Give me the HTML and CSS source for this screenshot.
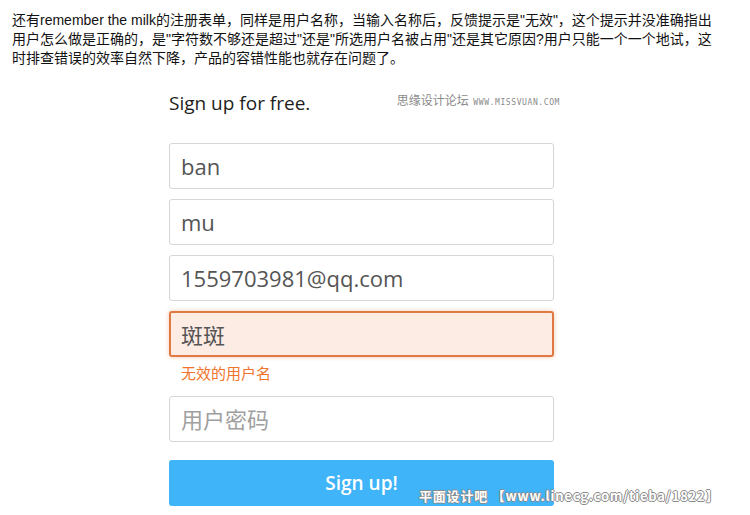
FILE: index.html
```html
<!DOCTYPE html>
<html lang="zh-CN">
<head>
    <meta charset="UTF-8">
    <title>Sign up for free</title>
    <link rel="stylesheet" href="styles.css">
</head>
<body>
    <p class="intro">还有remember the milk的注册表单，同样是用户名称，当输入名称后，反馈提示是"无效"，这个提示并没准确指出用户怎么做是正确的，是"字符数不够还是超过"还是"所选用户名被占用"还是其它原因?用户只能一个一个地试，这时排查错误的效率自然下降，产品的容错性能也就存在问题了。</p>

    <div class="signup">
        <div class="signup-head">
            <h1>Sign up for free.</h1>
            <span class="mark">思缘设计论坛 <small>WWW.MISSVUAN.COM</small></span>
        </div>

        <form class="signup-form">
            <input type="text" class="field" value="ban">
            <input type="text" class="field" value="mu">
            <input type="text" class="field" value="1559703981@qq.com">
            <input type="text" class="field field-error" value="斑斑">
            <div class="error-msg">无效的用户名</div>
            <input type="password" class="field field-last" placeholder="用户密码">
            <button type="button" class="signup-btn">Sign up!</button>
        </form>
    </div>

    <div class="credit">平面设计吧 【www.linecg.com/tieba/1822】</div>
</body>
</html>
```

FILE: styles.css
```css
* {
    margin: 0;
    padding: 0;
    box-sizing: border-box;
}

body {
    background: #fff;
    font-family: 'Liberation Sans', 'Noto Sans CJK SC', sans-serif;
    position: relative;
    min-height: 515px;
}

.intro {
    width: 708px;
    margin-left: 12px;
    padding-top: 11px;
    font-size: 14px;
    line-height: 19px;
    color: #111;
}

.signup {
    width: 385px;
    margin-left: 169px;
    margin-top: 23px;
}

.signup-head {
    display: flex;
    justify-content: space-between;
    align-items: flex-start;
    margin-right: -6px;
    margin-bottom: 28px;
}

.signup-head h1 {
    font-family: 'Open Sans', sans-serif;
    font-weight: 400;
    font-size: 19px;
    line-height: 24px;
    color: #1d1d1d;
}

.mark {
    font-family: 'Noto Sans CJK SC', sans-serif;
    font-size: 12px;
    line-height: 14px;
    color: #8a8a8a;
    margin-top: 2px;
}

.mark small {
    font-family: 'DejaVu Sans Mono', monospace;
    font-size: 8px;
    letter-spacing: 0.6px;
    margin-left: 2px;
}

.signup-form {
    display: flex;
    flex-direction: column;
}

.field {
    height: 46px;
    width: 100%;
    margin-bottom: 10px;
    padding: 0 11px;
    border: 1px solid #d6d6d6;
    border-radius: 3px;
    background: #fff;
    font-family: 'Open Sans', 'Noto Sans CJK SC', sans-serif;
    font-size: 22px;
    color: #555;
    outline: none;
}

.field::placeholder {
    color: #a0a0a0;
}

.field-error {
    background: #fdece3;
    border: 2px solid #e07a45;
    padding: 0 10px;
    box-shadow: 0 0 4px rgba(235, 130, 70, 0.45);
    margin-bottom: 6px;
}

.error-msg {
    padding-left: 12px;
    font-family: 'Noto Sans CJK SC', sans-serif;
    font-size: 15px;
    line-height: 20px;
    color: #f0742c;
    margin-bottom: 13px;
}

.field-last {
    margin-bottom: 18px;
}

.signup-btn {
    height: 46px;
    width: 100%;
    border: none;
    border-radius: 3px;
    background: #40b4f9;
    color: #fff;
    font-family: 'Open Sans', sans-serif;
    font-size: 19px;
    font-weight: 600;
    cursor: pointer;
}

.credit {
    position: absolute;
    left: 419px;
    top: 488px;
    font-family: 'Noto Sans CJK SC', sans-serif;
    font-size: 13px;
    font-weight: 700;
    line-height: 16px;
    letter-spacing: 0.8px;
    color: #fff;
    white-space: nowrap;
    text-shadow: 1px 0 0 #8a8a8a, -1px 0 0 #8a8a8a, 0 1px 0 #8a8a8a, 0 -1px 0 #8a8a8a;
}
```
